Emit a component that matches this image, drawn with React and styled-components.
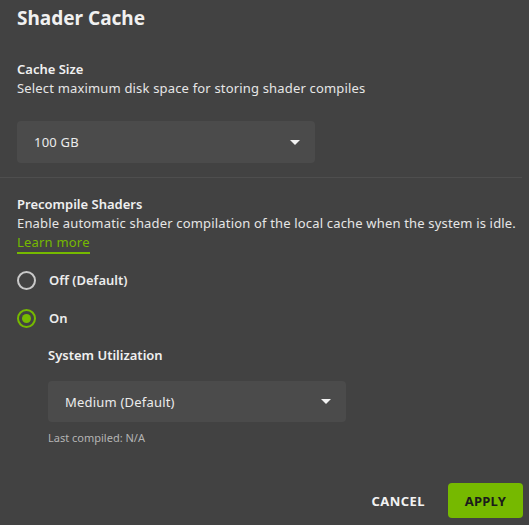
import React, { useState } from 'react';
import styled, { createGlobalStyle } from 'styled-components';

const GlobalStyle = createGlobalStyle`
  html, body {
    margin: 0;
    padding: 0;
    background: #424242;
  }
  body {
    font-family: "Noto Sans", "Liberation Sans", sans-serif;
    color: #ededed;
  }
`;

const Panel = styled.div`
  width: 529px;
  height: 525px;
  background: #424242;
  display: flex;
  flex-direction: column;
`;

const Section = styled.div`
  padding: 0 17px;
  display: flex;
  flex-direction: column;
  align-items: flex-start;
`;

const Title = styled.h1`
  margin: 6px 0 0;
  font-size: 19px;
  line-height: 24px;
  font-weight: 700;
  color: #f0f0f0;
`;

const Label = styled.div`
  margin-top: ${p => p.$top || 0}px;
  font-size: 13px;
  line-height: 19px;
  font-weight: 600;
  color: #f0f0f0;
`;

const Description = styled.div`
  font-size: 13px;
  line-height: 19px;
  letter-spacing: 0.17px;
  white-space: nowrap;
  color: #e6e6e6;
`;

const LearnMore = styled.a`
  font-size: 13px;
  line-height: 19px;
  letter-spacing: 0.2px;
  color: #76b900;
  text-decoration: none;
  border-bottom: 2px solid #76b900;
`;

const Select = styled.div`
  margin-top: ${p => p.$top || 0}px;
  width: 298px;
  height: ${p => p.$height || 42}px;
  box-sizing: border-box;
  padding: 0 15px 0 17px;
  background: #4b4b4b;
  border-radius: 4px;
  display: flex;
  align-items: center;
  justify-content: space-between;
  font-size: 13px;
  letter-spacing: 0.2px;
  color: #ececec;
  cursor: pointer;
`;

const Caret = styled.span`
  width: 0;
  height: 0;
  border-left: 5px solid transparent;
  border-right: 5px solid transparent;
  border-top: 5px solid #f2f2f2;
`;

const Divider = styled.div`
  margin: 14px 7px 0 0;
  height: 1px;
  background: #4e4e4e;
`;

const RadioGroup = styled.div`
  margin-top: 11px;
  display: flex;
  flex-direction: column;
  gap: 8px;
`;

const RadioRow = styled.label`
  height: 30px;
  display: flex;
  align-items: center;
  gap: 13px;
  font-size: 13px;
  font-weight: 600;
  color: #ececec;
  cursor: pointer;
`;

const RadioDot = styled.span`
  width: 19px;
  height: 19px;
  box-sizing: border-box;
  border-radius: 50%;
  border: 2px solid ${p => (p.$checked ? '#76b900' : '#c9c9c9')};
  display: flex;
  align-items: center;
  justify-content: center;

  &::after {
    content: '';
    width: 9px;
    height: 9px;
    border-radius: 50%;
    background: ${p => (p.$checked ? '#76b900' : 'transparent')};
  }
`;

const SubOptions = styled.div`
  padding-left: 31px;
  display: flex;
  flex-direction: column;
  align-items: flex-start;
`;

const Hint = styled.div`
  margin-top: 9px;
  font-size: 11px;
  line-height: 14px;
  color: #b4b4b4;
`;

const Footer = styled.div`
  margin-top: auto;
  padding: 0 6px 7px 0;
  display: flex;
  justify-content: flex-end;
  align-items: center;
  gap: 23px;
`;

const Button = styled.button`
  height: 35px;
  padding: 0 ${p => (p.$primary ? '17px' : '0')};
  border: none;
  border-radius: 4px;
  background: ${p => (p.$primary ? '#76b900' : 'transparent')};
  color: ${p => (p.$primary ? '#1b1b1b' : '#f2f2f2')};
  font-family: inherit;
  font-size: 13px;
  font-weight: 700;
  letter-spacing: ${p => (p.$primary ? '0.2px' : '0.4px')};
  cursor: pointer;
`;

export default function App() {
  const [precompile, setPrecompile] = useState('on');

  return (
    <Panel>
      <GlobalStyle />
      <Section>
        <Title>Shader Cache</Title>
        <Label $top={30}>Cache Size</Label>
        <Description>Select maximum disk space for storing shader compiles</Description>
        <Select $top={23}>
          <span>100 GB</span>
          <Caret />
        </Select>
      </Section>
      <Divider />
      <Section>
        <Label $top={17}>Precompile Shaders</Label>
        <Description>
          Enable automatic shader compilation of the local cache when the system is idle.
        </Description>
        <LearnMore href="#">Learn more</LearnMore>
        <RadioGroup>
          <RadioRow onClick={() => setPrecompile('off')}>
            <RadioDot $checked={precompile === 'off'} />
            Off (Default)
          </RadioRow>
          <RadioRow onClick={() => setPrecompile('on')}>
            <RadioDot $checked={precompile === 'on'} />
            On
          </RadioRow>
        </RadioGroup>
        <SubOptions>
          <Label $top={13}>System Utilization</Label>
          <Select $top={16} $height={41}>
            <span>Medium (Default)</span>
            <Caret />
          </Select>
          <Hint>Last compiled: N/A</Hint>
        </SubOptions>
      </Section>
      <Footer>
        <Button>CANCEL</Button>
        <Button $primary>APPLY</Button>
      </Footer>
    </Panel>
  );
}
